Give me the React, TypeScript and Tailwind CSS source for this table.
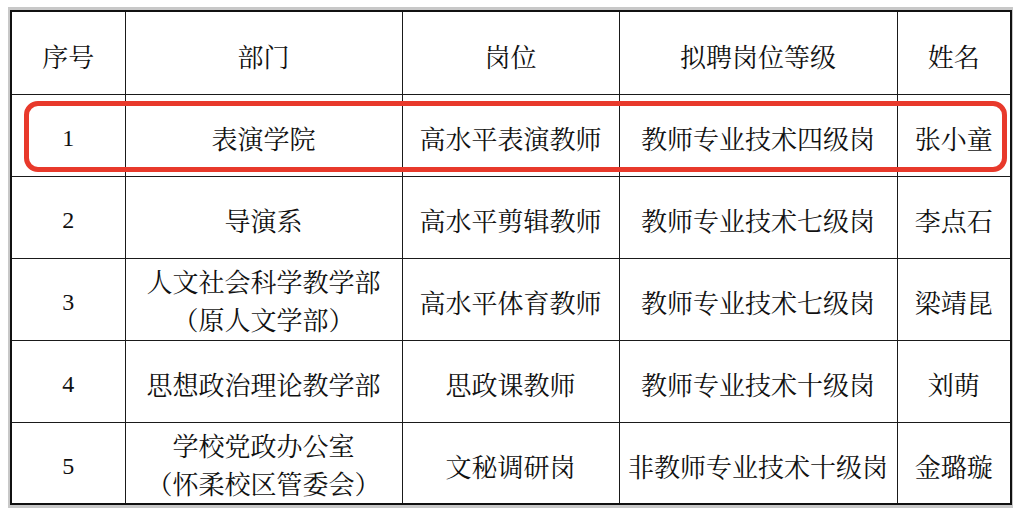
const rows = [
  { no: "1", dept: ["表演学院"], post: "高水平表演教师", level: "教师专业技术四级岗", name: "张小童" },
  { no: "2", dept: ["导演系"], post: "高水平剪辑教师", level: "教师专业技术七级岗", name: "李点石" },
  { no: "3", dept: ["人文社会科学教学部", "（原人文学部）"], post: "高水平体育教师", level: "教师专业技术七级岗", name: "梁靖昆" },
  { no: "4", dept: ["思想政治理论教学部"], post: "思政课教师", level: "教师专业技术十级岗", name: "刘萌" },
  { no: "5", dept: ["学校党政办公室", "（怀柔校区管委会）"], post: "文秘调研岗", level: "非教师专业技术十级岗", name: "金璐璇" },
];

const cjk = "font-['Noto_Serif_CJK_SC','Liberation_Serif','Noto_Sans_CJK_SC',serif]";
const cell = "border border-[#1a1a1a] text-center align-middle p-0 pt-[6px]";

export default function App() {
  return (
    <div className={`w-[1020px] h-[518px] bg-white pt-[7px] pl-[8px] text-[#111] ${cjk}`}>
      <div className="relative w-[1005px] bg-[#c8c8c8] pl-[2px] pt-[3px] pr-[3px] pb-[3px]">
        <table className="table-fixed border-collapse w-[1000px] border-2 border-[#111] bg-white text-[26px] leading-[38px]">
          <colgroup>
            <col className="w-[114px]" />
            <col className="w-[277px]" />
            <col className="w-[217px]" />
            <col className="w-[278px]" />
            <col className="w-[114px]" />
          </colgroup>
          <thead>
            <tr className="h-[83px]">
              <th className={`${cell} font-normal`}>序号</th>
              <th className={`${cell} font-normal`}>部门</th>
              <th className={`${cell} font-normal`}>岗位</th>
              <th className={`${cell} font-normal`}>拟聘岗位等级</th>
              <th className={`${cell} font-normal`}>姓名</th>
            </tr>
          </thead>
          <tbody>
            {rows.map((r) => (
              <tr key={r.no} className="h-[82px]">
                <td className={`${cell} text-[24px] font-['Liberation_Serif',serif]`}>{r.no}</td>
                <td className={`border border-[#1a1a1a] text-center align-middle p-0 ${r.dept.length > 1 ? "pt-[2px]" : "pt-[6px]"}`}>
                  {r.dept.map((d) => (
                    <div key={d}>{d}</div>
                  ))}
                </td>
                <td className={cell}>{r.post}</td>
                <td className={`${cell} whitespace-nowrap`}>{r.level}</td>
                <td className={cell}>{r.name}</td>
              </tr>
            ))}
          </tbody>
        </table>
        {/* highlight around row 1 */}
        <div className="absolute left-[16px] top-[94px] w-[983px] h-[71px] border-[5px] border-[#e8392b] rounded-[14px] pointer-events-none" />
      </div>
    </div>
  );
}
